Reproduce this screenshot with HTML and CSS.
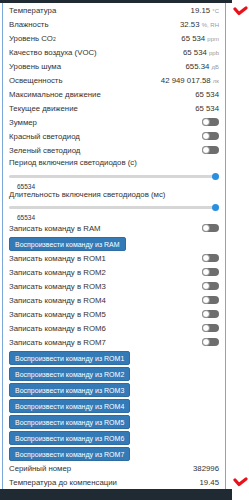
FILE: index.html
```html
<!DOCTYPE html>
<html lang="ru">
<head>
    <meta charset="UTF-8">
    <meta name="viewport" content="width=device-width, initial-scale=1.0">
    <link rel="stylesheet" href="styles.css">
</head>
<body>
    <div class="page">
        <div class="main">
            <div class="topbar"></div>

            <div class="card">
                <!-- Показания датчиков -->
                <div class="row"><span>Температура</span><span class="value">19.15 <span class="unit">°C</span></span></div>
                <div class="row"><span>Влажность</span><span class="value">32.53 <span class="unit">%, RH</span></span></div>
                <div class="row"><span>Уровень CO<sub>2</sub></span><span class="value">65 534 <span class="unit">ppm</span></span></div>
                <div class="row"><span>Качество воздуха (VOC)</span><span class="value">65 534 <span class="unit">ppb</span></span></div>
                <div class="row"><span>Уровень шума</span><span class="value">655.34 <span class="unit">дБ</span></span></div>
                <div class="row"><span>Освещенность</span><span class="value">42 949 017.58 <span class="unit">лк</span></span></div>
                <div class="row"><span>Максимальное движение</span><span class="value">65 534</span></div>
                <div class="row"><span>Текущее движение</span><span class="value">65 534</span></div>

                <!-- Переключатели -->
                <div class="row"><span>Зуммер</span><span class="switch"></span></div>
                <div class="row"><span>Красный светодиод</span><span class="switch"></span></div>
                <div class="row"><span>Зеленый светодиод</span><span class="switch"></span></div>

                <!-- Слайдеры -->
                <div class="slider-label">Период включения светодиодов (с)</div>
                <input type="range" class="slider" min="0" max="65534" value="65534">
                <div class="slider-value">65534</div>
                <div class="slider-label second">Длительность включения светодиодов (мс)</div>
                <input type="range" class="slider" min="0" max="65534" value="65534">
                <div class="slider-value">65534</div>

                <div class="row"><span>Записать команду в RAM</span><span class="switch"></span></div>
                <div class="buttons">
                    <button class="btn">Воспроизвести команду из RAM</button>
                </div>

                <div class="row"><span>Записать команду в ROM1</span><span class="switch"></span></div>
                <div class="row"><span>Записать команду в ROM2</span><span class="switch"></span></div>
                <div class="row"><span>Записать команду в ROM3</span><span class="switch"></span></div>
                <div class="row"><span>Записать команду в ROM4</span><span class="switch"></span></div>
                <div class="row"><span>Записать команду в ROM5</span><span class="switch"></span></div>
                <div class="row"><span>Записать команду в ROM6</span><span class="switch"></span></div>
                <div class="row"><span>Записать команду в ROM7</span><span class="switch"></span></div>

                <div class="buttons">
                    <button class="btn">Воспроизвести команду из ROM1</button>
                    <button class="btn">Воспроизвести команду из ROM2</button>
                    <button class="btn">Воспроизвести команду из ROM3</button>
                    <button class="btn">Воспроизвести команду из ROM4</button>
                    <button class="btn">Воспроизвести команду из ROM5</button>
                    <button class="btn">Воспроизвести команду из ROM6</button>
                    <button class="btn">Воспроизвести команду из ROM7</button>
                </div>

                <div class="row"><span>Серийный номер</span><span class="value">382996</span></div>
                <div class="row"><span>Температура до компенсации</span><span class="value">19.45</span></div>
            </div>

            <div class="bottombar"></div>
        </div>

        <div class="side">
            <svg class="chevron" viewBox="0 0 15 10" width="15" height="10">
                <polyline points="2,3 6,7.5 13,2" fill="none" stroke="#e8121a" stroke-width="3.2" stroke-linecap="round" stroke-linejoin="round"/>
            </svg>
            <svg class="chevron" viewBox="0 0 15 10" width="15" height="10">
                <polyline points="2,3 6,7.5 13,2" fill="none" stroke="#e8121a" stroke-width="3.2" stroke-linecap="round" stroke-linejoin="round"/>
            </svg>
        </div>
    </div>
</body>
</html>
```

FILE: styles.css
```css
body {
    margin: 0;
    padding: 0;
    background-color: #ffffff;
    font-family: "Liberation Sans", Arial, sans-serif;
    font-size: 7.8px;
    color: #333333;
    overflow: hidden;
}

.page {
    display: flex;
    height: 500px;
}

.main {
    width: 232px;
    display: flex;
    flex-direction: column;
}

.topbar {
    height: 3px;
    background-color: #1f2a33;
}

.bottombar {
    flex: 1;
    background-color: #1f2a33;
}

.card {
    margin-left: 2px;
    width: 224px;
    box-sizing: border-box;
    border-left: 1px solid #7ba7d9;
    border-right: 1px solid #7ba7d9;
    padding: 0 6px 0 6px;
    background-color: #ffffff;
}

.row {
    display: flex;
    justify-content: space-between;
    align-items: center;
    height: 14px;
}

.row sub {
    font-size: 5px;
    vertical-align: baseline;
}

.value {
    text-align: right;
}

.unit {
    font-size: 6px;
    color: #999999;
}

/* Переключатель */
.switch {
    display: flex;
    align-items: center;
    width: 17px;
    height: 8px;
    border-radius: 4px;
    background-color: #6e6e6e;
}

.switch::before {
    content: '';
    width: 8px;
    height: 8px;
    box-sizing: border-box;
    border-radius: 50%;
    background-color: #ffffff;
    border: 1px solid #8c8c8c;
}

/* Слайдер */
.slider-label {
    line-height: 12px;
}

.slider-label.second {
    line-height: 10px;
}

.slider {
    -webkit-appearance: none;
    appearance: none;
    display: block;
    width: 210px;
    height: 14px;
    margin: 0;
    background: transparent;
}

.slider::-webkit-slider-runnable-track {
    height: 3px;
    background-color: #d6d6d6;
    border-radius: 2px;
}

.slider::-webkit-slider-thumb {
    -webkit-appearance: none;
    width: 7px;
    height: 7px;
    margin-top: -2px;
    border-radius: 50%;
    background-color: #2b8fe0;
    border: none;
}

.slider-value {
    font-size: 6.5px;
    line-height: 7px;
    padding-left: 8px;
}

/* Кнопки */
.buttons {
    display: flex;
    flex-direction: column;
    align-items: flex-start;
    gap: 2px;
    padding: 2px 0 0 0;
}

.btn {
    height: 14px;
    padding: 0 5px;
    font-family: "Liberation Sans", Arial, sans-serif;
    font-size: 7px;
    color: #ffffff;
    background-color: #337ab7;
    border: 1px solid #2e6da4;
    border-radius: 2px;
    cursor: pointer;
}

.side {
    flex: 1;
    display: flex;
    flex-direction: column;
    justify-content: space-between;
    align-items: center;
    padding: 6px 0 13px 0;
}
```
